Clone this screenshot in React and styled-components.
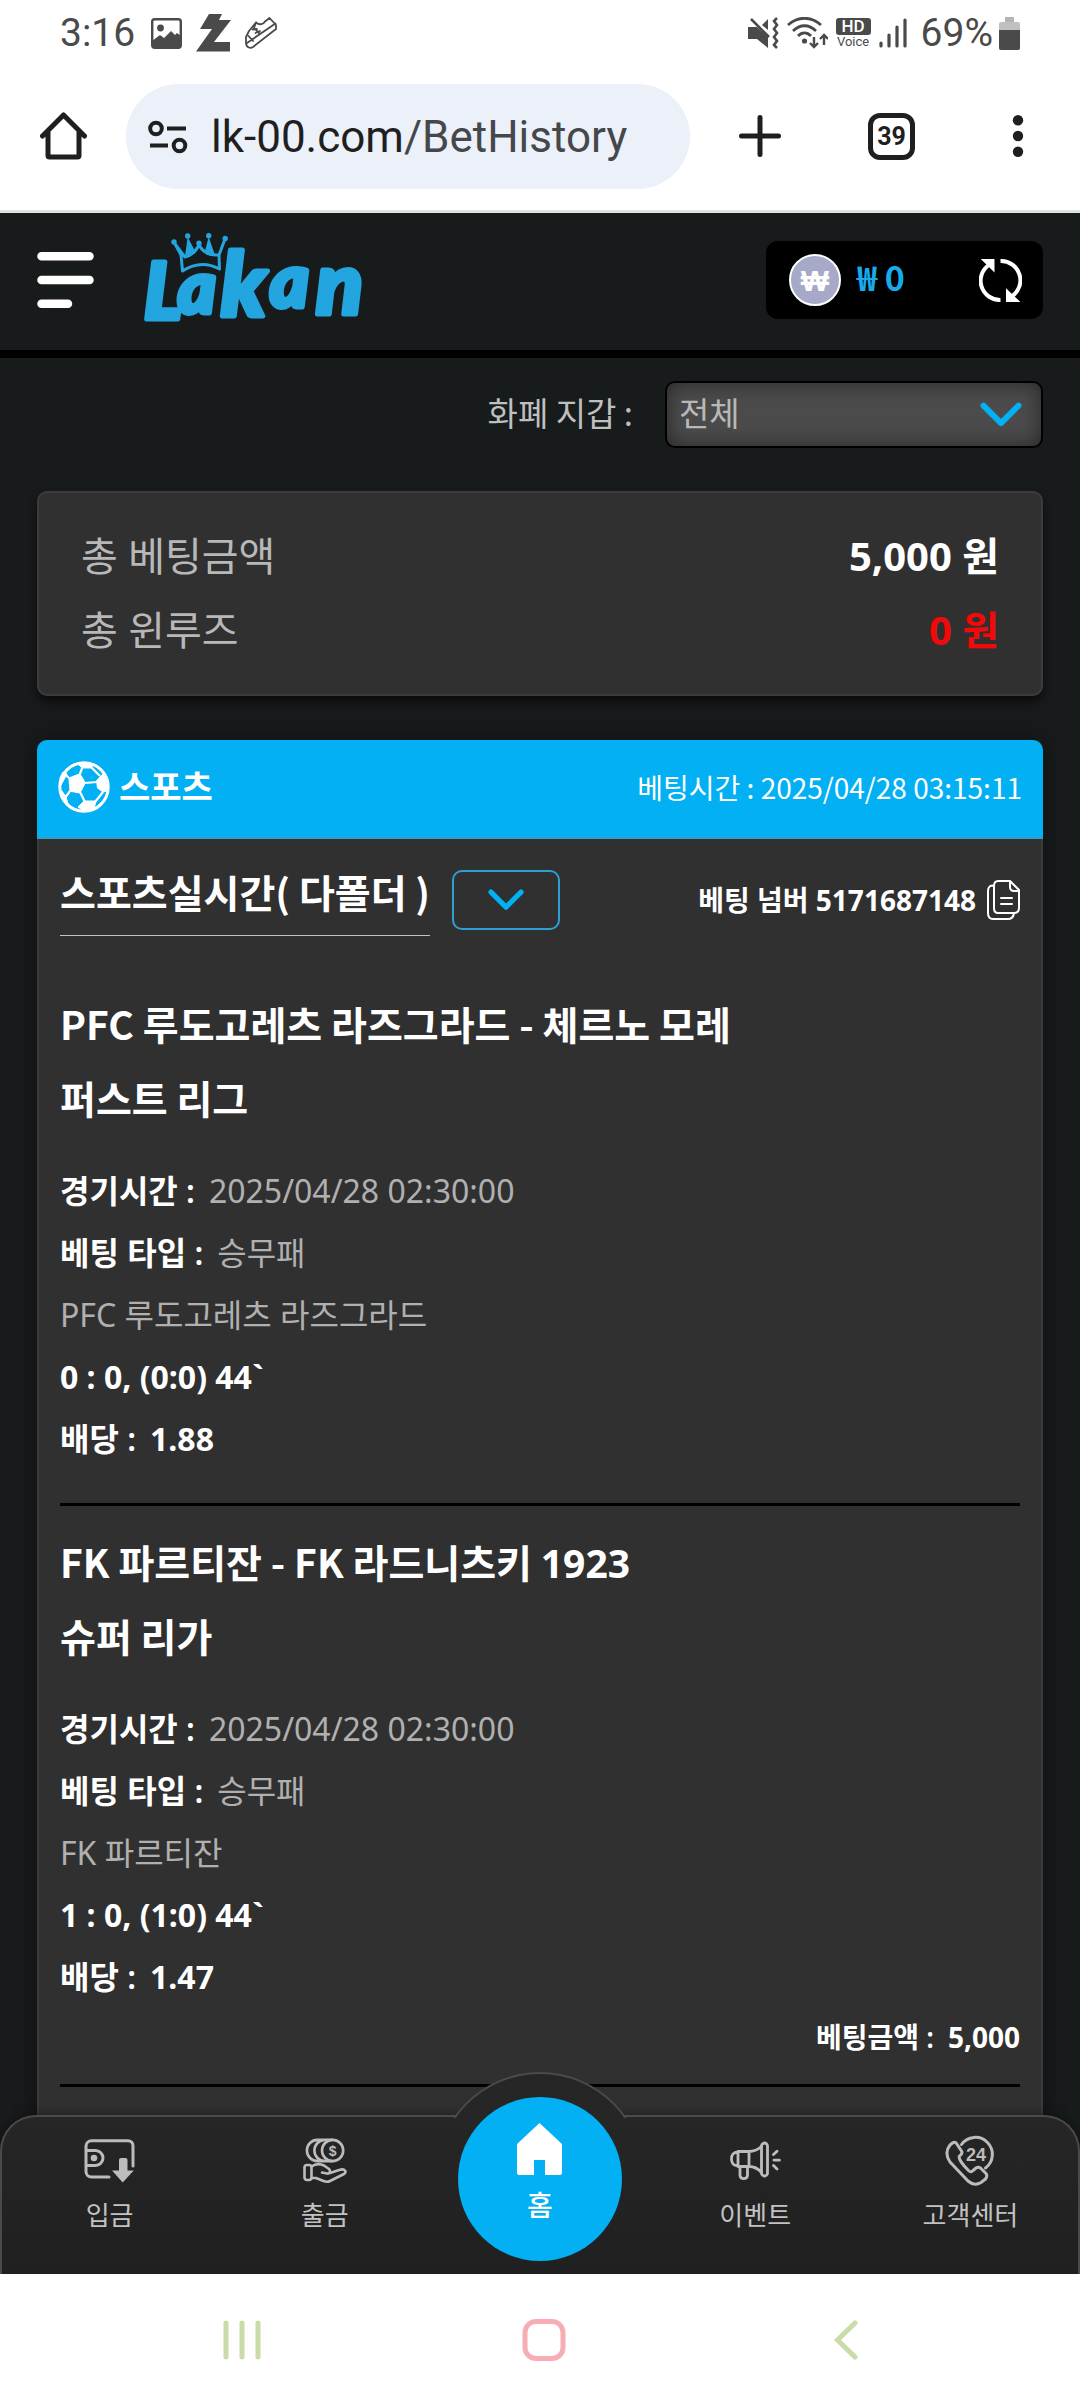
import React from 'react'
import styled, { createGlobalStyle } from 'styled-components'

const BLUE = '#02b0f3'

const matches = [
  {
    title: 'PFC 루도고레츠 라즈그라드 - 체르노 모레',
    league: '퍼스트 리그',
    time: '2025/04/28 02:30:00',
    type: '승무패',
    pick: 'PFC 루도고레츠 라즈그라드',
    score: '0 : 0, (0:0) 44`',
    odds: '1.88'
  },
  {
    title: 'FK 파르티잔 - FK 라드니츠키 1923',
    league: '슈퍼 리가',
    time: '2025/04/28 02:30:00',
    type: '승무패',
    pick: 'FK 파르티잔',
    score: '1 : 0, (1:0) 44`',
    odds: '1.47',
    amount: '5,000'
  }
]

// digits come from the latin face, also inside korean titles
const boldDigits = text =>
  text.split(/(\d[\d,.]*)/).map((part, i) => (i % 2 ? <b key={i}>{part}</b> : part))

export default function App() {
  return (
    <Screen>
      <GlobalStyle />
      <StatusBar />
      <BrowserBar />
      <Site>
        <SiteHeader />
        <Content>
          <Filter>
            <label htmlFor="wallet">화폐 지갑 :</label>
            <SelectWrap>
              <WalletSelect id="wallet" defaultValue="all">
                <option value="all">전체</option>
              </WalletSelect>
              <SelectArrow><Chevron size={42} /></SelectArrow>
            </SelectWrap>
          </Filter>

          <Totals>
            <TotalRow><dt>총 베팅금액</dt><TotalValue>{boldDigits('5,000 원')}</TotalValue></TotalRow>
            <TotalRow><dt>총 윈루즈</dt><TotalValue $negative>{boldDigits('0 원')}</TotalValue></TotalRow>
          </Totals>

          <BetCard>
            <BetHead>
              <Sport><BallIcon />스포츠</Sport>
              <BetTime>베팅시간 : 2025/04/28 03:15:11</BetTime>
            </BetHead>
            <BetBody>
              <BetTop>
                <BetTitle>스포츠실시간( 다폴더 )</BetTitle>
                <FoldButton type="button" aria-label="접기"><Chevron size={36} /></FoldButton>
                <BetNumber>
                  <span>베팅 넘버 5171687148</span>
                  <CopyButton type="button" aria-label="복사"><CopyIcon /></CopyButton>
                </BetNumber>
              </BetTop>
              {matches.map(match => <Match key={match.title} {...match} />)}
            </BetBody>
          </BetCard>
        </Content>
        <BottomTabs />
      </Site>
      <SystemNav />
    </Screen>
  )
}

function Match({ title, league, time, type, pick, score, odds, amount }) {
  return (
    <CssMatch>
      <MatchTitle>{boldDigits(title)}</MatchTitle>
      <MatchTitle as="p">{league}</MatchTitle>
      <MatchInfo $last={!amount}>
        <li><Label>경기시간 :</Label><Muted>{time}</Muted></li>
        <li><Label>베팅 타입 :</Label><Muted>{type}</Muted></li>
        <li><Muted>{pick}</Muted></li>
        <li><b>{score}</b></li>
        <li><Label>배당 :</Label><b>{odds}</b></li>
      </MatchInfo>
      {amount && <Amount><Label>베팅금액 :</Label><b>{amount}</b></Amount>}
    </CssMatch>
  )
}

function StatusBar() {
  return (
    <CssStatus>
      <Clock>3:16</Clock>
      <StatusIcons $left>
        <svg width="31" height="31" viewBox="0 0 31 31">
          <rect x="1.2" y="1.2" width="28.6" height="28.6" rx="2.5" fill="none" stroke="#4a4a4a" strokeWidth="2.4" />
          <circle cx="9.5" cy="10" r="3.4" fill="#4a4a4a" />
          <path d="M1 23l8-6 4 3 7-7 4 4 2-2 4 3v12H1z" fill="#4a4a4a" />
        </svg>
        <svg width="35" height="38" viewBox="0 0 35 38">
          <path d="M13 0H26L23 6H35L18 28H34V37.500H0L16 15H4z" fill="#4a4a4a" />
        </svg>
        <svg width="32" height="32" viewBox="0 0 32 32" fill="none" stroke="#4a4a4a" strokeWidth="1.800" strokeLinejoin="round" strokeLinecap="round">
          <path d="M11 5.500C14 8 18 8 20 4.500L24.500 1L31 8V12L8 30C5 32 1 30 1 26V20L4 14z" />
          <path d="M2 26L30.500 6.500M3.500 19L8 24M11 5.500L9 11L15 17M7.500 12.500L12 12M10.500 16L15 14" />
        </svg>
      </StatusIcons>
      <StatusIcons>
        <svg width="31" height="32" viewBox="0 0 31 32">
          <path d="M0 10H9L20 20V31L9 22H0zM20 2V13L14 8z" fill="#4a4a4a" />
          <path d="M3 2L21 20M29 1l-3 3 3 4-3 4 3 4-3 4 3 4-3 4 3 3" fill="none" stroke="#4a4a4a" strokeWidth="2.600" />
        </svg>
        <svg width="41" height="32" viewBox="0 0 41 32" fill="none" stroke="#4a4a4a" strokeWidth="2.800">
          <path d="M1 8C11-1 24-1 34 8M6 14C13 7 22 7 29 14M11 19C15 15 20 15 24 19" />
          <circle cx="17.500" cy="24" r="2.600" fill="#4a4a4a" stroke="none" />
          <path d="M27 20V30M23 26L27 30L31 26M37 28V18M33 22L37 18L41 22" strokeWidth="2.400" />
        </svg>
        <HdVoice><b>HD</b><span>Voice</span></HdVoice>
        <svg width="28" height="30" viewBox="0 0 28 30" stroke="#4a4a4a" strokeWidth="3.200" strokeLinecap="round">
          <path d="M2 25V28M10 17V28M18 9V28M26 2V28" />
        </svg>
      </StatusIcons>
      <Clock as="span">69%</Clock>
      <svg width="21" height="33" viewBox="0 0 21 33">
        <path d="M6 0H15V5H6z" fill="#b4b4b4" />
        <rect y="5" width="21" height="28" rx="2" fill="#c0c0c0" />
        <path d="M0 13H21V31a2 2 0 0 1-2 2H2a2 2 0 0 1-2-2z" fill="#4a4a4a" />
      </svg>
    </CssStatus>
  )
}

function BrowserBar() {
  return (
    <CssBrowser>
      <BarButton type="button" aria-label="Home">
        <svg width="47" height="48" viewBox="0 0 47 48" fill="none" stroke="#1f1f1f" strokeWidth="5" strokeLinecap="round" strokeLinejoin="round">
          <path d="M2.500 24L23.500 3L44.500 24M8 20V43.500Q8 45 9.500 45H37.500Q39 45 39 43.500V20" />
        </svg>
      </BarButton>
      <Address>
        <svg width="40" height="34" viewBox="0 0 40 34" fill="none" stroke="#1f1f1f" strokeWidth="4">
          <circle cx="8" cy="8.500" r="5.800" />
          <circle cx="31.500" cy="25.500" r="5.800" />
          <path d="M19 8.500H38M2 25.500H20" />
        </svg>
        <span>lk-00.com<i>/BetHistory</i></span>
      </Address>
      <BarTools>
        <BarButton type="button" aria-label="New tab">
          <svg width="42" height="42" viewBox="0 0 42 42" stroke="#1f1f1f" strokeWidth="5" strokeLinecap="round">
            <path d="M21 2.500V39.500M2.500 21H39.500" />
          </svg>
        </BarButton>
        <TabCount type="button">39</TabCount>
        <BarButton type="button" aria-label="Menu">
          <svg width="32" height="42" viewBox="0 0 32 42" fill="#1f1f1f">
            <circle cx="16" cy="5.200" r="5.200" />
            <circle cx="16" cy="21" r="5.200" />
            <circle cx="16" cy="36.800" r="5.200" />
          </svg>
        </BarButton>
      </BarTools>
    </CssBrowser>
  )
}

function SiteHeader() {
  return (
    <CssHeader>
      <BarButton type="button" aria-label="메뉴">
        <svg width="57" height="56" viewBox="0 0 57 56" stroke="#fff" strokeWidth="8.500" strokeLinecap="round">
          <path d="M4.500 4.300H52.500M4.500 28H52.500M4.500 51.700H31" />
        </svg>
      </BarButton>
      <LogoLink href="#" aria-label="Lakan">
        <svg width="222" height="92" viewBox="0 0 222 92">
          <LogoText>
            <tspan x="0" y="86" fontSize="78">L</tspan>
            <tspan x="34" y="80" fontSize="72">a</tspan>
            <tspan x="77" y="83" fontSize="88">k</tspan>
            <tspan x="126" y="74" fontSize="74">a</tspan>
            <tspan x="172" y="81" fontSize="86">n</tspan>
          </LogoText>
          <g fill="#23a5df">
            <circle cx="30" cy="9" r="2.700" />
            <circle cx="43.700" cy="3" r="2.700" />
            <circle cx="55" cy="10.300" r="2.700" />
            <circle cx="64.700" cy="2.700" r="2.700" />
            <circle cx="81.200" cy="5.500" r="2.700" />
            <path d="M43.700 4L51 18L41 23zM64.700 4L61 18L71 22z" />
          </g>
          <path
            d="M30 9L37 22L38.500 38Q57 26 75.500 36L75 22L81 6M31 11L41 24Q50 22 55 12Q61 23 74 22"
            fill="none" stroke="#23a5df" strokeWidth="3" strokeLinejoin="round"
          />
        </svg>
      </LogoLink>
      <Balance>
        <Coin>₩</Coin>
        <BalanceValue>₩ 0</BalanceValue>
        <BarButton type="button" aria-label="새로고침">
          <svg width="43" height="43" viewBox="0 0 43 43">
            <path d="M21.500 41A19.300 19.300 0 0 1 10 5.800M21.500 2A19.300 19.300 0 0 1 33 37.200" fill="none" stroke="#fff" strokeWidth="4" />
            <path d="M1.800 0H15.500V13.500zM27 29.300V43H41.400z" fill="#fff" />
          </svg>
        </BarButton>
      </Balance>
    </CssHeader>
  )
}

function Chevron({ size }) {
  return (
    <svg width={size} height={size * 0.6} viewBox="0 0 42 25" fill="none" stroke={BLUE} strokeWidth="6" strokeLinecap="round" strokeLinejoin="round">
      <path d="M3.500 3.500L21 21L38.500 3.500" />
    </svg>
  )
}

function BallIcon() {
  return (
    <svg width="52" height="52" viewBox="0 0 52 52" fill="#fff" stroke="#fff" strokeLinejoin="round">
      <circle cx="26" cy="26" r="24.200" fill="none" strokeWidth="3" />
      <path d="M10.900 17L21.900 12.800L27.400 21.800L21.900 32L12 30.200z" />
      <path d="M38.500 19.500L45 13L50 18V30L45 31L39.500 27zM19 2L36 3L33 7H24zM2 17L5 11L9 13L3 24zM26 40H38L36 48L26 50L20 46zM4 36H8L11 46z" />
      <path d="M21.900 13L24.500 6M27 22L39 21M22 31L27 41M12 30L7 37M11 17L6 12M33 6L42 15M37 41L45 31M8 37L3 30" fill="none" strokeWidth="2.200" />
    </svg>
  )
}

function CopyIcon() {
  return (
    <svg width="33" height="40" viewBox="0 0 33 40" fill="none" stroke="#fff" strokeWidth="2" strokeLinejoin="round" strokeLinecap="round">
      <path d="M11 1H23L32 10V28Q32 33 27 33H11Q7 33 7 28V6Q7 1 11 1zM23 1V7Q23 11 27 11H32M7 5.500Q1 5 1 11V33Q1 39 6 39H21Q26 39 27 33.500M14 18H25M14 24H25" />
    </svg>
  )
}

function BottomTabs() {
  return (
    <CssTabs>
      <Hump />
      <Tab href="#">
        <svg width="51" height="44" viewBox="0 0 51 44" fill="none" stroke="#bcbcbc" strokeWidth="3" strokeLinecap="round">
          <path d="M25 38H7.500A5.500 5.500 0 0 1 2 32.500V7A5.500 5.500 0 0 1 7.500 1.700H44A5 5 0 0 1 49 6.700V27M2 11.500H11.500A7.500 7.500 0 0 1 11.500 26.500H2" />
          <circle cx="10" cy="19" r="3.300" fill="#bcbcbc" stroke="none" />
          <path d="M35 21Q35 19 37 19H41.500Q43.500 19 43.500 21V31.500H49.800L38.700 43.500L28 31.500H35z" fill="#bcbcbc" stroke="none" />
        </svg>
        입금
      </Tab>
      <Tab href="#">
        <svg width="44" height="45" viewBox="0 0 44 45" fill="none" stroke="#bcbcbc" strokeWidth="2.600" strokeLinecap="round" strokeLinejoin="round">
          <circle cx="29.600" cy="12" r="10.600" />
          <path d="M22 1.400A10.600 10.600 0 0 0 22 22.600M14.500 1.400A10.600 10.600 0 0 0 14.500 22.600M14.500 1.400H29M14.500 22.600H29" />
          <rect x="1.500" y="26.500" width="7" height="15" rx="2.500" />
          <path d="M8.500 28C12 25.500 17 25 21 27L26 30.500C28 33 26.500 35.500 24 35L19 34M27 34.500L37 31.200C42 30 44 33 41 35.500L27 42.500C25 43.500 23 43.500 20.500 42.500L13 39.500H8.500" />
          <IconText x="29.600" y="17" fontSize="14">$</IconText>
        </svg>
        출금
      </Tab>
      <HomeTab href="#">
        <svg width="45" height="52" viewBox="0 0 45 52" fill="#fff">
          <path d="M22.500 0L45 21V50Q45 52 43 52H28V37H17V52H2Q0 52 0 50V21z" />
        </svg>
        홈
      </HomeTab>
      <Tab href="#">
        <svg width="51" height="39" viewBox="0 0 51 39" fill="none" stroke="#bcbcbc" strokeWidth="2.800" strokeLinecap="round" strokeLinejoin="round">
          <rect x="31.500" y="1.500" width="6" height="33" rx="3" />
          <path d="M31.500 5C28 8 24 10 19 10H8V25H19C24 25 28 27 31.500 31M19 10V25M8 10.500C3 11 1.500 13 1.500 17.500S3 24 8 24.500" />
          <path d="M10 25V34A3.800 3.800 0 0 0 17.500 34V25M43.500 13L47 9.700M44 18.700H49.500M43.500 24L47 27.500" />
        </svg>
        이벤트
      </Tab>
      <Tab href="#">
        <svg width="50" height="50" viewBox="0 0 50 50" fill="none" stroke="#bcbcbc" strokeWidth="3" strokeLinecap="round" strokeLinejoin="round">
          <path d="M16.500 8.500A17 17 0 1 1 40.500 32" />
          <path d="M5 9L7.500 7C9 6 10.500 6 11.500 7.500L16.500 15C17.500 17 17 18.500 14.500 20C13 22 17 28 23.500 34.500C25.500 36.500 26.500 36 28 34.500L31 32C32.500 31 34 31 35.500 32L41 37.500C42.500 39.500 42 41 40.500 43L36 46.500C32 49 27 48.500 23 45L5 26C1 20 1 14 5 9z" />
          <IconText x="31" y="24.500" fontSize="18">24</IconText>
        </svg>
        고객센터
      </Tab>
    </CssTabs>
  )
}

function SystemNav() {
  return (
    <CssSystem>
      <SystemButton type="button" aria-label="Recents">
        <svg width="38" height="40" viewBox="0 0 38 40" stroke="#c9dba6" strokeWidth="5" strokeLinecap="round">
          <path d="M3 3V37M19 3V37M35 3V37" />
        </svg>
      </SystemButton>
      <SystemButton type="button" aria-label="Home screen">
        <svg width="44" height="42" viewBox="0 0 44 42" fill="none" stroke="#f6adb3" strokeWidth="5">
          <rect x="3" y="2.500" width="38" height="37" rx="11" />
        </svg>
      </SystemButton>
      <SystemButton type="button" aria-label="Back">
        <svg width="24" height="40" viewBox="0 0 24 40" fill="none" stroke="#c9dba6" strokeWidth="5" strokeLinecap="round">
          <path d="M21 3L3.500 20L21 37" />
        </svg>
      </SystemButton>
    </CssSystem>
  )
}


const GlobalStyle = createGlobalStyle`
  * {
    box-sizing: border-box;
    margin: 0;
    padding: 0;
  }
  body {
    background: #fff;
    font-family: "Noto Sans", "Noto Sans CJK KR", sans-serif;
  }
  svg {
    display: block;
    flex: none;
  }
  b {
    font-family: "Noto Sans", sans-serif;
    font-weight: 700;
    line-height: 1;
  }
  button {
    border: 0;
    background: none;
    font: inherit;
    color: inherit;
  }
  a {
    color: inherit;
    text-decoration: none;
  }
`

const Screen = styled.div`
  display: flex;
  flex-direction: column;
  height: 100vh;
`

const CssStatus = styled.div`
  display: flex;
  align-items: center;
  height: 66px;
  padding: 0 60px;
  font-family: Roboto, sans-serif;
  color: #4a4a4a;
`

const Clock = styled.time`
  margin-right: 6px;
  font-size: 39px;
  line-height: 66px;
`

const StatusIcons = styled.div`
  display: flex;
  align-items: center;
  gap: ${({$left}) => ($left ? '14px' : '8px')};
  margin-left: ${({$left}) => ($left ? '10px' : 'auto')};
  margin-right: 14px;
`

const HdVoice = styled.div`
  display: flex;
  flex-direction: column;
  align-items: center;
  font-size: 13px;
  line-height: 14px;
  & b {
    width: 35px;
    border-radius: 3px;
    background: #4a4a4a;
    color: #fff;
    font-family: Roboto, sans-serif;
    font-size: 17px;
    font-weight: 500;
    line-height: 17px;
    text-align: center;
  }
`

const CssBrowser = styled.div`
  display: flex;
  align-items: center;
  height: 147px;
  padding: 0 46px 4px 40px;
  border-bottom: 3px solid #dfe2df;
  font-family: Roboto, sans-serif;
  color: #1f1f1f;
`

const BarButton = styled.button`
  display: flex;
  align-items: center;
  justify-content: center;
`

const Address = styled.div`
  display: flex;
  align-items: center;
  gap: 23px;
  flex: 1;
  height: 105px;
  margin-left: 39px;
  padding: 2px 0 0 22px;
  border-radius: 53px;
  background: #ebf0f9;
  font-size: 44px;
  & i {
    font-style: normal;
    color: #45484b;
  }
`

const BarTools = styled.div`
  display: flex;
  align-items: center;
  gap: 87px;
  margin-left: 49px;
`

const TabCount = styled.button`
  && {
    width: 47px;
    height: 47px;
    border: 5px solid #1f1f1f;
    border-radius: 12px;
    font-size: 25px;
    font-weight: 700;
    line-height: 37px;
  }
`

const Site = styled.div`
  display: flex;
  flex-direction: column;
  flex: 1;
  min-height: 0;
  position: relative;
  overflow: hidden;
  background: #181b1c;
`

const CssHeader = styled.header`
  display: flex;
  align-items: center;
  flex: none;
  height: 145px;
  padding: 0 37px 3px;
  border-bottom: 8px solid #000;
`

const LogoLink = styled.a`
  margin: 0 auto 2px 50px;
  & svg {
    overflow: visible;
  }
`

const LogoText = styled.text`
  font-family: Lato, sans-serif;
  font-style: italic;
  font-weight: 900;
  fill: #23a5df;
  stroke: #23a5df;
  stroke-width: 5px;
  stroke-linejoin: round;
`

const Balance = styled.div`
  display: flex;
  align-items: center;
  width: 277px;
  height: 78px;
  padding: 0 21px 0 23px;
  border-radius: 12px;
  background: #000;
`

const Coin = styled.span`
  width: 52px;
  height: 52px;
  border: 2px solid #fff;
  border-radius: 50%;
  background: #a6a9c8;
  color: #fff;
  font-family: "Open Sans", sans-serif;
  font-size: 30px;
  font-weight: 800;
  line-height: 48px;
  text-align: center;
`

const BalanceValue = styled.span`
  margin: 0 auto 0 16px;
  color: #18aaea;
  font-family: "Noto Sans CJK KR", sans-serif;
  font-size: 34px;
  font-weight: 700;
  line-height: 48px;
  padding-bottom: 6px;
`

const Content = styled.main`
  display: flex;
  flex-direction: column;
  flex: 1;
  min-height: 0;
  padding: 23px 37px 0;
`

const Filter = styled.div`
  display: flex;
  align-items: center;
  justify-content: flex-end;
  flex: none;
  gap: 32px;
  color: #bfbfbf;
  font-family: "Noto Sans CJK KR", sans-serif;
  font-size: 33px;
  & label {
    padding-bottom: 6px;
  }
`

const SelectWrap = styled.div`
  position: relative;
  width: 378px;
`

const WalletSelect = styled.select`
  display: block;
  width: 100%;
  height: 67px;
  padding: 0 12px 6px;
  appearance: none;
  border: 2px solid #000;
  border-radius: 10px;
  background: #4b4b4b;
  box-shadow: inset 0 0 20px rgba(0, 0, 0, 0.5);
  color: #b8b8b8;
  font: inherit;
`

const SelectArrow = styled.span`
  position: absolute;
  top: 21px;
  right: 21px;
  pointer-events: none;
`

const Totals = styled.dl`
  flex: none;
  margin: 43px 0 44px;
  padding: 26px 42px 27px;
  border: 2px solid #3c3c3e;
  border-radius: 10px;
  background: #303030;
  box-shadow: 0 6px 10px rgba(0, 0, 0, 0.6);
`

const TotalRow = styled.div`
  display: flex;
  justify-content: space-between;
  color: #b8b8b8;
  font-size: 40px;
  line-height: 74px;
`

const TotalValue = styled.dd`
  color: ${({$negative}) => ($negative ? '#f30909' : '#fff')};
  font-weight: 600;
`

const BetCard = styled.section`
  display: flex;
  flex-direction: column;
  flex: 1;
  min-height: 0;
  box-shadow: 0 0 20px rgba(0, 0, 0, 0.4);
`

const BetHead = styled.header`
  display: flex;
  align-items: center;
  justify-content: space-between;
  flex: none;
  height: 99px;
  padding: 0 21px 4px;
  border-bottom: 2px solid #3a9cc4;
  border-radius: 10px 10px 0 0;
  background: ${BLUE};
  color: #fff;
`

const Sport = styled.h2`
  display: flex;
  align-items: center;
  gap: 9px;
  font-size: 34px;
  font-weight: 600;
  line-height: 52px;
`

const BetTime = styled.span`
  font-family: "Noto Sans CJK KR", sans-serif;
  font-size: 28px;
`

const BetBody = styled.div`
  flex: 1;
  padding: 31px 21px 0;
  border: 2px solid #3c3c3e;
  border-top: 0;
  border-bottom: 0;
  background: #303030;
  color: #fff;
`

const BetTop = styled.div`
  display: flex;
  align-items: flex-start;
  margin-bottom: 50px;
`

const BetTitle = styled.h3`
  padding-bottom: 22px;
  border-bottom: 1px solid #c4c4c4;
  font-family: "Noto Sans CJK KR", sans-serif;
  font-size: 39px;
  font-weight: 700;
  line-height: 43px;
`

const FoldButton = styled.button`
  && {
    display: flex;
    align-items: center;
    justify-content: center;
    width: 108px;
    height: 60px;
    margin-left: 22px;
    border: 2px solid #2d9fd0;
    border-radius: 10px;
  }
`

const BetNumber = styled.div`
  display: flex;
  align-items: center;
  gap: 11px;
  margin-left: auto;
  font-size: 28px;
  font-weight: 700;
  line-height: 60px;
`

const CopyButton = styled(BarButton)`
  height: 52px;
`

const CssMatch = styled.article`
  margin-bottom: 18px;
  border-bottom: 3px solid #000;
`

const MatchTitle = styled.h4`
  font-family: "Noto Sans CJK KR", sans-serif;
  font-size: 39px;
  font-weight: 700;
  line-height: 74px;
`

const MatchInfo = styled.ul`
  padding: 26px 0 ${({$last}) => ($last ? '33px' : '0')};
  list-style: none;
  font-size: 32px;
  line-height: 62px;
`

const Label = styled.span`
  margin-right: 14px;
  font-weight: 600;
`

const Muted = styled.span`
  color: #b0b0b0;
  font-weight: 400;
`

const Amount = styled.p`
  padding-bottom: 18px;
  font-size: 28px;
  line-height: 58px;
  text-align: right;
`

const CssTabs = styled.nav`
  display: grid;
  grid-template-columns: repeat(5, 1fr);
  position: absolute;
  left: 0;
  right: 0;
  bottom: 0;
  height: 159px;
  border: 2px solid #4a4a4a;
  border-bottom: 0;
  border-radius: 36px 36px 0 0;
  background: linear-gradient(#262626, #202020);
  box-shadow: 0 0 12px rgba(0, 0, 0, 0.4);
`

/* the round bump behind the home button */
const Hump = styled.span`
  position: absolute;
  top: -45px;
  left: calc(50% - 106px);
  width: 212px;
  height: 46px;
  overflow: hidden;
  &::before {
    content: '';
    display: block;
    height: 212px;
    border: 2px solid #4a4a4a;
    border-radius: 50%;
    background: #262626;
  }
`

const Tab = styled.a`
  display: flex;
  flex-direction: column;
  align-items: center;
  padding-top: 4px;
  color: #c2c2c2;
  font-size: 26px;
  line-height: 28px;
  & svg {
    height: 80px;
  }
`

const HomeTab = styled(Tab)`
  justify-self: center;
  position: relative;
  top: -20px;
  width: 164px;
  height: 164px;
  padding-top: 26px;
  border-radius: 50%;
  background: ${BLUE};
  color: #fff;
  font-size: 28px;
  font-weight: 500;
  line-height: 60px;
  && svg {
    height: 52px;
  }
`

const IconText = styled.text`
  fill: #bcbcbc;
  stroke: none;
  font-family: "Liberation Sans", sans-serif;
  font-weight: 700;
  text-anchor: middle;
`

const CssSystem = styled.div`
  display: flex;
  align-items: center;
  justify-content: space-between;
  height: 126px;
  padding: 6px 212px 0 220px;
`

const SystemButton = styled(BarButton)`
  width: 44px;
`
